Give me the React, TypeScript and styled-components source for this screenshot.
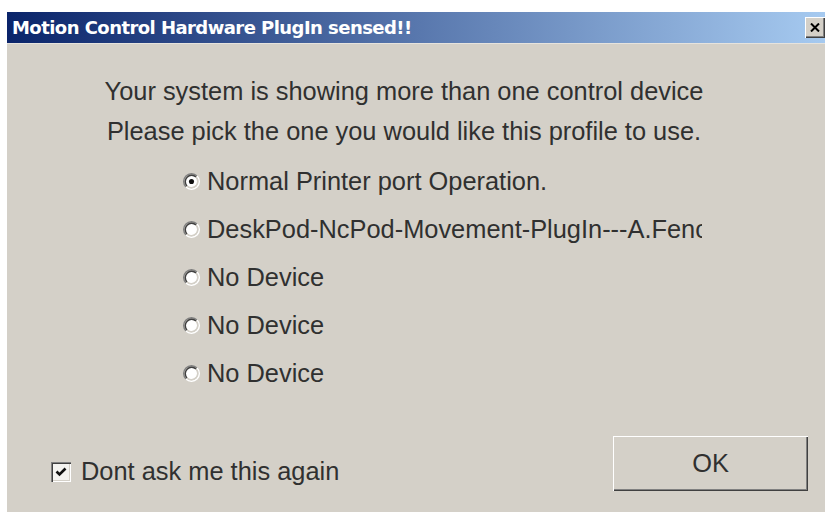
import React from "react";
import styled, { createGlobalStyle } from "styled-components";

const GlobalStyle = createGlobalStyle`
  html, body {
    margin: 0;
    background: #ffffff;
    overflow: hidden;
  }
`;

const Window = styled.div`
  margin: 12px 0 0 7px;
  width: 818px;
  height: 500px;
  display: flex;
  flex-direction: column;
  font-family: "Liberation Sans", Arial, sans-serif;
`;

const TitleBar = styled.div`
  height: 31px;
  flex-shrink: 0;
  display: flex;
  align-items: center;
  justify-content: space-between;
  padding-left: 5px;
  background: linear-gradient(to right, #0a246a 0%, #a6caf0 100%);
`;

const Title = styled.span`
  color: #ffffff;
  font-family: "DejaVu Sans", Verdana, sans-serif;
  font-weight: bold;
  font-size: 18px;
  letter-spacing: -0.55px;
`;

const CloseButton = styled.div`
  width: 20px;
  height: 21px;
  display: flex;
  align-items: center;
  justify-content: center;
  background: #d4d0c8;
  box-shadow: inset 1px 1px #ffffff, inset -1px -1px #404040,
    inset -2px -2px #808080;
`;

const Body = styled.div`
  flex: 1;
  display: flex;
  flex-direction: column;
  background: #d4d0c8;
  border-top: 1px solid #e6e3dd;
  padding-top: 27px;
  color: #303030;
  font-size: 25.4px;
`;

const Message = styled.div`
  text-align: center;
  line-height: 40px;
  padding-right: 24px;
`;

const OptionList = styled.div`
  margin-top: 6px;
  padding-left: 176px;
  display: flex;
  flex-direction: column;
`;

const OptionRow = styled.label`
  height: 48px;
  display: flex;
  align-items: center;
  gap: 7px;
`;

// the driver name is longer than its control, so the label cuts it off
const OptionText = styled.span<{ $clip?: number }>`
  white-space: nowrap;
  overflow: hidden;
  ${(p) => (p.$clip ? `width: ${p.$clip}px;` : "")}
`;

const Footer = styled.div`
  margin-top: 39px;
  padding: 0 17px 0 44px;
  display: flex;
  justify-content: space-between;
  align-items: flex-start;
`;

const CheckRow = styled.label`
  margin-top: 21px;
  display: flex;
  align-items: center;
  gap: 10px;
`;

const CheckBox = styled.span`
  width: 20px;
  height: 20px;
  display: flex;
  align-items: center;
  justify-content: center;
  background: #f4f3f0;
  box-shadow: inset 1px 1px #808080, inset 2px 2px #404040,
    inset -1px -1px #ffffff, inset -2px -2px #d4d0c8;
`;

const OkButton = styled.button`
  width: 195px;
  height: 55px;
  border: none;
  background: #d4d0c8;
  color: #303030;
  font-family: "Liberation Sans", Arial, sans-serif;
  font-size: 25.4px;
  box-shadow: inset 1px 1px #ffffff, inset -1px -1px #404040,
    inset -2px -2px #808080;
  padding: 0;
`;

function Radio({ checked }: { checked?: boolean }) {
  return (
    <svg width="17" height="17" viewBox="0 0 12 12">
      <circle cx="6" cy="6" r="4" fill="#ffffff" />
      <path d="M2.11 9.89 A5.5 5.5 0 0 1 9.89 2.11" fill="none" stroke="#808080" />
      <path d="M9.89 2.11 A5.5 5.5 0 0 1 2.11 9.89" fill="none" stroke="#ffffff" />
      <path d="M2.82 9.18 A4.5 4.5 0 0 1 9.18 2.82" fill="none" stroke="#404040" />
      <path d="M9.18 2.82 A4.5 4.5 0 0 1 2.82 9.18" fill="none" stroke="#d4d0c8" />
      {checked && <circle cx="6" cy="6" r="1.8" fill="#111111" />}
    </svg>
  );
}

const options = [
  { label: "Normal Printer port Operation.", checked: true },
  { label: "DeskPod-NcPod-Movement-PlugIn---A.Fence", clip: 495 },
  { label: "No Device" },
  { label: "No Device" },
  { label: "No Device" },
];

export default function App() {
  return (
    <>
      <GlobalStyle />
      <Window>
        <TitleBar>
          <Title>Motion Control Hardware PlugIn sensed!!</Title>
          <CloseButton>
            <svg width="10" height="9" viewBox="0 0 10 9">
              <path d="M1 0.5 L9 8.5 M9 0.5 L1 8.5" stroke="#000" strokeWidth="2" />
            </svg>
          </CloseButton>
        </TitleBar>
        <Body>
          <Message>
            <div>Your system is showing more than one control device</div>
            <div>Please pick the one you would like this profile to use.</div>
          </Message>
          <OptionList>
            {options.map((o, i) => (
              <OptionRow key={i}>
                <Radio checked={o.checked} />
                <OptionText $clip={o.clip}>{o.label}</OptionText>
              </OptionRow>
            ))}
          </OptionList>
          <Footer>
            <CheckRow>
              <CheckBox>
                <svg width="12" height="12" viewBox="0 0 12 12">
                  <path d="M1.5 5.5 L4.5 8.5 L10.5 2.5" fill="none" stroke="#111" strokeWidth="2.6" />
                </svg>
              </CheckBox>
              <span>Dont ask me this again</span>
            </CheckRow>
            <OkButton>OK</OkButton>
          </Footer>
        </Body>
      </Window>
    </>
  );
}
